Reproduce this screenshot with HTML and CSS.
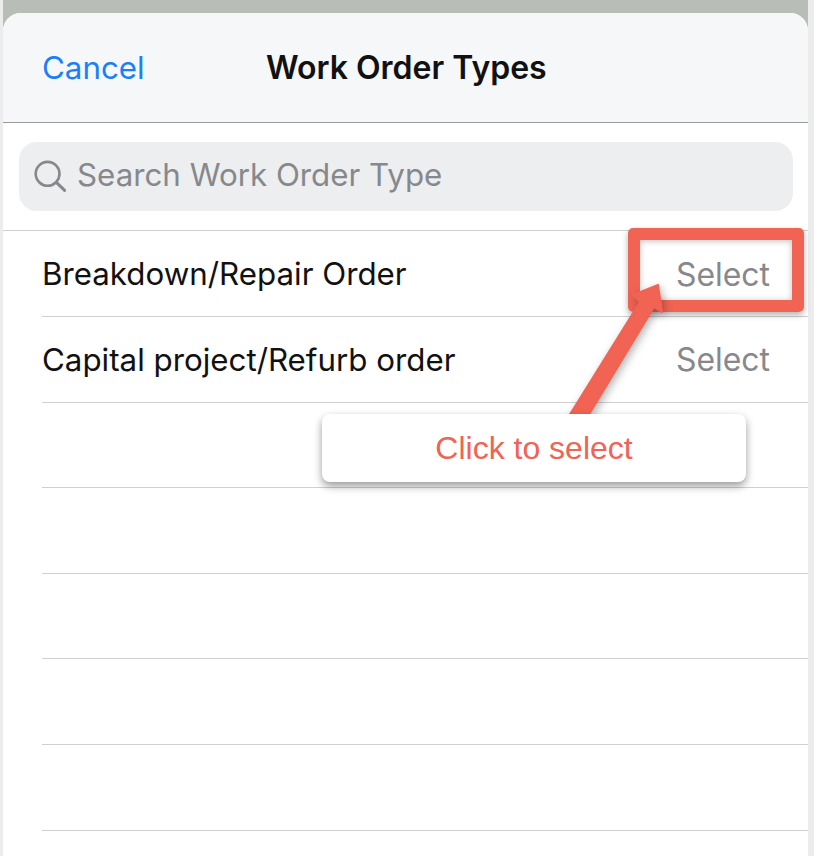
FILE: index.html
```html
<!DOCTYPE html>
<html lang="en">
<head>
    <meta charset="UTF-8">
    <meta name="viewport" content="width=device-width, initial-scale=1.0">
    <title>Work Order Types</title>
    <link rel="stylesheet" href="styles.css">
</head>
<body>
    <div class="screen">
        <div class="sheet">
            <header class="sheet-header">
                <a class="cancel">Cancel</a>
                <h1>Work Order Types</h1>
            </header>
            <div class="search-wrap">
                <div class="search">
                    <svg class="search-icon" width="34" height="34" viewBox="0 0 34 34" fill="none" stroke="#87888b">
                        <circle cx="14.6" cy="13.8" r="11.9" stroke-width="2.6"/>
                        <path d="M23.6 22.6L31.6 30.4" stroke-width="3" stroke-linecap="round"/>
                    </svg>
                    <span>Search Work Order Type</span>
                </div>
            </div>
            <ul class="list">
                <li><span>Breakdown/Repair Order</span><span class="select">Select</span></li>
                <li><span>Capital project/Refurb order</span><span class="select">Select</span></li>
                <li></li>
                <li></li>
                <li></li>
                <li></li>
                <li></li>
                <li></li>
            </ul>
        </div>
    </div>

    <!-- annotation on top of the screenshot -->
    <div class="highlight"></div>
    <svg class="arrow" width="814" height="856" viewBox="0 0 814 856">
        <path d="M569 416L640 302L633 295L658 285L662 312L654 307L588 416Z" fill="#f16352" stroke="#f16352" stroke-width="2" stroke-linejoin="round"/>
    </svg>
    <div class="tip">Click to select</div>
</body>
</html>
```

FILE: styles.css
```css
body {
    margin: 0;
    height: 856px;
    overflow: hidden;
    position: relative;
    font-family: Inter, "Liberation Sans", sans-serif;
    background-color: #ececec;
}
.screen {
    margin: 0 6px 0 3px;
    padding-top: 13px;
    background-color: #b9bdb8;
}
.sheet {
    height: 843px;
    overflow: hidden;
    background-color: white;
    border-radius: 18px 18px 0 0;
}
.sheet-header {
    height: 110px;
    display: flex;
    align-items: center;
    padding-left: 39px;
    box-sizing: border-box;
    background-color: #f6f7f9;
    border-bottom: 1px solid #9a9a9c;
}
.cancel {
    width: 224px;
    font-size: 31.3px;
    color: #1a7ffb;
}
h1 {
    margin: 0;
    font-size: 32px;
    font-weight: 600;
    color: #111;
}
.search-wrap {
    padding: 19px 15px 19px 16px;
    border-bottom: 1px solid #cfd0d0;
}
.search {
    height: 69px;
    display: flex;
    align-items: center;
    gap: 10px;
    padding-left: 14px;
    padding-bottom: 3px;
    box-sizing: border-box;
    background-color: #edeef0;
    border-radius: 18px;
    font-size: 31.3px;
    color: #87888b;
}
.search-icon {
    margin-top: 3px;
}
.list {
    margin: 0;
    padding: 0.4px 0 0 39px;
    list-style: none;
}
.list li {
    height: 83.6px;
    padding-top: 1px;
    display: flex;
    align-items: center;
    justify-content: space-between;
    padding-right: 38px;
    border-bottom: 1px solid #cfd0d0;
    font-size: 31.3px;
    color: #111;
}
.select {
    font-size: 31.9px;
    color: #87888b;
}
.highlight {
    position: absolute;
    left: 628px;
    top: 228px;
    width: 152px;
    height: 60px;
    border: 12px solid #f16352;
    border-radius: 5px;
    box-shadow: 0 3px 6px rgba(0, 0, 0, 0.3), inset 0 1px 6px rgba(0, 0, 0, 0.25);
}
.arrow {
    position: absolute;
    left: 0;
    top: 0;
    filter: drop-shadow(2px 3px 4px rgba(0, 0, 0, 0.3));
}
.tip {
    position: absolute;
    left: 322px;
    top: 414px;
    width: 424px;
    height: 68px;
    line-height: 68px;
    text-align: center;
    background-color: white;
    border-radius: 8px;
    box-shadow: 0 4px 8px rgba(0, 0, 0, 0.4);
    font-family: "Liberation Sans", Arial, sans-serif;
    font-size: 32px;
    color: #f16352;
}
```
